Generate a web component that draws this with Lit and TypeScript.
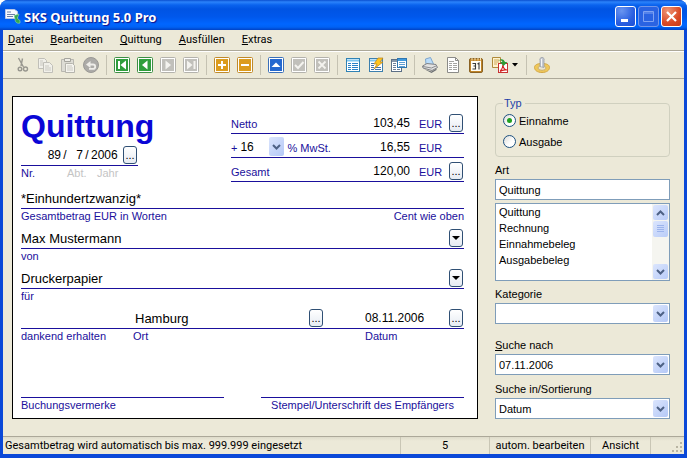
import { LitElement, html, css, svg, nothing, TemplateResult, SVGTemplateResult } from "lit";
import { customElement, property } from "lit/decorators.js";

const tile = (fill: string, edge: string, glyph: SVGTemplateResult) => svg`
  <rect x="0.5" y="0.5" width="15" height="15" rx="1" fill="#fff" stroke="${edge}"/>
  <rect x="2" y="2" width="12" height="12" fill="${fill}"/>${glyph}`;

const GREEN = "#2f9e3c";
const GREEN_EDGE = "#3d8f45";
const GREY = "#c1c0bb";
const GREY_EDGE = "#b3b2ac";
const GOLD = "#dc9c1e";
const GOLD_EDGE = "#c08a2a";

const icons: Record<string, SVGTemplateResult> = {
  cut: svg`<g fill="none" stroke="#98978f" stroke-width="1.4"><path d="M4.500 1 9.500 10M8.500 1.500 7 9" /><circle cx="6" cy="12" r="1.800"/><circle cx="11.500" cy="12" r="2"/></g>`,
  copy: svg`<g fill="#f1f0ea" stroke="#c0bfb8"><path d="M1.5 1.500h6l2 2v8h-8z"/><path d="M6.500 5.500h6l3 3v7h-9z"/></g><path d="M3 4h3M3 6h3M3 8h3M8 9h4M8 11h6M8 13h6" stroke="#c9c8c1"/>`,
  paste: svg`<path d="M1.500 2.500h12v12h-12z" fill="#dddcd5" stroke="#b8b7b0"/><path d="M4.500 1.500h6v3h-6z" fill="#efeee8" stroke="#a5a49e"/><path d="M5.500 6.500h7l2 2v7h-9z" fill="#f5f4ef" stroke="#b5b4ad"/><path d="M7 9h5M7 11h6M7 13h6" stroke="#c9c8c1"/>`,
  undo: svg`<circle cx="8" cy="8" r="7.500" fill="#acaba8" stroke="#9a9995"/><path d="M5 7.500h5a2.200 2.200 0 0 1 0 4.400H6" fill="none" stroke="#eeede9" stroke-width="1.800"/><path d="M3 7.500 7.500 4v7z" fill="#eeede9"/>`,
  first: tile(GREEN, GREEN_EDGE, svg`<path d="M4 4h2v8H4zM12 3.500v9L6.500 8z" fill="#fff"/>`),
  prev: tile(GREEN, GREEN_EDGE, svg`<path d="M10.500 3.500v9L5 8z" fill="#fff"/>`),
  next: tile(GREY, GREY_EDGE, svg`<path d="M5.500 3.500v9L11 8z" fill="#f4f3ef"/>`),
  last: tile(GREY, GREY_EDGE, svg`<path d="M10.500 4h2v8h-2zM4 3.500v9L9.500 8z" fill="#f4f3ef"/>`),
  plus: tile(GOLD, GOLD_EDGE, svg`<path d="M7 4h2v3h3v2H9v3H7V9H4V7h3z" fill="#fff"/>`),
  minus: tile(GOLD, GOLD_EDGE, svg`<path d="M4 7h8v2H4z" fill="#fff"/>`),
  up: tile("#2468cf", "#3a6fb8", svg`<path d="M3.500 10 8 5.500l4.500 4.500z" fill="#fff"/>`),
  check: tile(GREY, GREY_EDGE, svg`<path d="M4 8l3 3 5.500-6" fill="none" stroke="#f4f3ef" stroke-width="2"/>`),
  cross: tile(GREY, GREY_EDGE, svg`<path d="M4.500 4.500l7 7M11.500 4.500l-7 7" stroke="#f4f3ef" stroke-width="1.800"/>`),
  list: svg`<rect x="1.500" y="1.500" width="13" height="13" fill="#fff" stroke="#2f82b5"/><path d="M2 3.500h12" stroke="#7cc4ee" stroke-width="2"/><path d="M3 6.500h3M3 8.500h3M3 10.500h3M3 12.500h3M7 6.500h6M7 8.500h6M7 10.500h6M7 12.500h6" stroke="#2a82c8"/>`,
  flash: svg`<rect x="1.500" y="1.500" width="13" height="13" fill="#fff" stroke="#3c7fae"/><path d="M2 3.500h12" stroke="#7cc4ee" stroke-width="2"/><path d="M3 6.500h3M3 8.500h3M3 10.500h3M3 12.500h3M7 10.500h6M7 12.500h6" stroke="#4272ac"/><path d="M10 1h5l-3 4h3L6 12l3-5H6z" fill="#ffc41e" stroke="#b8821b" stroke-width=".7"/>`,
  windows: svg`<rect x=".5" y="2.500" width="10" height="12" fill="#fff" stroke="#5c6f86"/><path d="M2 6.500h3M2 8.500h3M2 10.500h3M2 12.500h3M6 12.500h3" stroke="#70829a"/><path d="M1 4h9" stroke="#8595a8" stroke-width="2"/><rect x="6.500" y="1.500" width="9" height="9" fill="#fff" stroke="#2f76b0"/><path d="M7 3h8" stroke="#3f9ade" stroke-width="2"/><path d="M8 5.500h6M8 7.500h6M8 9.500h6" stroke="#5f9fd2"/>`,
  print: svg`<path d="M4 7.500 3.500 2l5-1.500 3 6.500" fill="#b9dcfa" stroke="#7fa6cc"/><path d="M.5 9 5 6.500l9 1 1.500 3-5.500 3L1 11z" fill="#e2e2e2" stroke="#808286"/><path d="M1 9.500l8.500 1.500L15 8.500" fill="none" stroke="#8b8d90"/><path d="M2 12l7.500 2.500 5-3v1.500L9.500 16z" fill="#6d7074"/>`,
  page: svg`<path d="M2.500.5h8l3 3v12h-11z" fill="#fff" stroke="#8b8b88"/><path d="M10.500.5v3h3" fill="none" stroke="#8b8b88"/><path d="M4 4.500h5M4 6.500h3M8 6.500h4M4 8.500h3M8 8.500h4M4 10.500h3M8 10.500h4M4 12.500h3M8 12.500h4" stroke="#a5a5a2"/>`,
  calendar: svg`<rect x="1.500" y="1.500" width="13" height="14" rx="1.500" fill="#c08428" stroke="#8a6224"/><rect x="3" y="4" width="10" height="10" fill="#fffdf5"/><path d="M4 .5v3M7 .5v3M10 .5v3M12.500.5v3" stroke="#f4e4b8"/><path d="M4.500 6.500h3v2.500h-2M7.500 9v3h-3M9.500 7l1.500-1v6.500" fill="none" stroke="#3a3a3a" stroke-width="1.100"/>`,
  pdf: svg`<path d="M.5.500h8v10h-8z" fill="#fdf3cf" stroke="#b08a3c"/><path d="M2 3h5M2 5h5M2 7h3" stroke="#cfa85a"/><rect x="6.500" y="6.500" width="9" height="9" fill="#fff" stroke="#c83232"/><path d="M8 14.500c2-2 3-4 3-7 0 3 1 5 4 5.500-3-.5-5 0-7 1.500z" fill="none" stroke="#d22020" stroke-width="1.100"/><path d="M6 4c3-3 6-2 7 1h2.500l-4 4-3.500-4h2.500C9.500 3 8 3 6 4z" fill="#2f9a36"/>`,
  stamp: svg`<path d="M.5 10.500C.5 8 3 6.500 8 6.500s7.500 1.500 7.500 4-2.500 5-7.500 5-7.500-2.500-7.500-5z" fill="#efc85a" stroke="#d2a646"/><ellipse cx="8" cy="11" rx="4" ry="2.300" fill="#e8e4d3" stroke="#c4a55a" stroke-width=".8"/><path d="M6 9.500V3.500a2.200 2.200 0 1 1 4 0v7z" fill="#c3c8d0" stroke="#9ba0a8" stroke-width=".8"/><path d="M7.500 2v7.500" stroke="#f3f5f8"/>`,
};

const glyph = (name: string) => html`<svg viewBox="0 0 16 16" width="16" height="16" aria-hidden="true">${icons[name]}</svg>`;

const chevron = (flip = false) => html`<svg viewBox="0 0 9 6" width="9" height="6" aria-hidden="true">
  <path d="${flip ? "M1 5l3.500-3.500L8 5" : "M1 1l3.500 3.500L8 1"}" fill="none" stroke="#4d6185" stroke-width="2"/></svg>`;

const shared = css`
  * { box-sizing: border-box; }
  button, input, select { font: inherit; color: inherit; margin: 0; padding: 0; border: 0; border-radius: 0; background: none; min-width: 0; }
  svg { display: block; flex: none; }
`;

@customElement("xp-combo")
export class XpCombo extends LitElement {
  @property() value = "";
  @property() label = "";
  @property({ type: Boolean, reflect: true }) flat = false;

  static styles = [shared, css`
    :host { display: block; }
    .combo { display: grid; grid-template-columns: 1fr 17px; height: 21px; border: 1px solid #7f9db9; background: #fff; }
    .field { appearance: none; grid-area: 1 / 1 / 2 / 3; width: 100%; height: 100%; padding-left: 3px; }
    .arrow { grid-area: 1 / 2; margin: 1px; border-radius: 2px; background: linear-gradient(135deg, #dbe5fd, #b4c8f6); display: flex; align-items: center; justify-content: center; pointer-events: none; }
    :host([flat]) .combo { border: 0; }
    :host([flat]) .field { padding-left: 0; }
  `];

  render() {
    return html`<div class="combo">
      <select class="field" aria-label=${this.label}><option>${this.value}</option></select>
      <span class="arrow">${chevron()}</span>
    </div>`;
  }
}

@customElement("app-titlebar")
export class AppTitlebar extends LitElement {
  static styles = [shared, css`
    .bar { display: flex; align-items: center; gap: 2px; height: 30px; padding: 3px 5px 0 5px; color: #fff;
      background: linear-gradient(#0a4fd0 0, #2b83fb 2px, #0a63ee 5px, #0054e3 9px, #0058ec 17px, #0066ff 24px, #0062f5 27px, #0042c4 30px); }
    .title { flex: 1; margin: 0; font: bold 13px/18px "Noto Sans", "Open Sans", sans-serif; text-shadow: 1px 1px 1px #0f1089; white-space: nowrap; }
    .btn { width: 21px; height: 21px; border: 1px solid #fff; border-radius: 3px; display: grid; place-items: center; background: radial-gradient(circle at 30% 20%, #6a95f0, #2a5fe0 60%, #1c4fd6); }
    .btn:disabled { border-color: #7096ea; background: #2a63e2; }
    .close { background: radial-gradient(circle at 30% 20%, #ee9576, #da4a26 60%, #c53a18); }
  `];

  render() {
    return html`<header class="bar">
      <svg viewBox="0 0 17 17" width="17" height="17" aria-hidden="true">
        <path d="M.5 1.500h9l3 2v7h-12z" fill="#f7f9ff" stroke="#b9c6e6"/>
        <path d="M2 4h4M2 6.500h8M2 8.500h6" stroke="#6d7ea8"/>
        <path d="M9 7.500l5-1.500-1 2.500c-1 2 0 3 2 4v2.500c-3 1-5-1-5-4z" fill="#34a853" stroke="#9adba8" stroke-width=".6"/>
      </svg>
      <h1 class="title">SKS Quittung 5.0 Pro</h1>
      <button class="btn" aria-label="Minimieren"><svg width="13" height="13"><path d="M2 9h7v3H2z" fill="#fff"/></svg></button>
      <button class="btn" disabled aria-label="Maximieren"><svg width="13" height="13"><path d="M1.500 1.500h10v10h-10zM1 3h11" fill="none" stroke="#7ea2f2"/></svg></button>
      <button class="btn close" aria-label="Schließen"><svg width="13" height="13"><path d="M2 2l9 9M11 2l-9 9" stroke="#fff" stroke-width="2.200"/></svg></button>
    </header>`;
  }
}

@customElement("app-toolbar")
export class AppToolbar extends LitElement {
  static styles = [shared, css`
    .menu { display: flex; gap: 17px; height: 21px; padding-left: 5px; border-bottom: 1px solid #aca899; line-height: 20px; }
    .tools { display: flex; align-items: center; height: 28px; padding-left: 7px; border-top: 1px solid #fff; border-bottom: 1px solid #aca899; }
    .tool { display: flex; align-items: center; justify-content: center; width: 23px; height: 22px; }
    .split { width: 35px; gap: 4px; }
    .sep { width: 8px; height: 20px; display: flex; justify-content: center; }
    .sep::before { content: ""; width: 1px; background: #c5c2b2; }
  `];

  private menu = ["Datei", "Bearbeiten", "Quittung", "Ausfüllen", "Extras"];
  private groups: [string, string][][] = [
    [["cut", "Ausschneiden"], ["copy", "Kopieren"], ["paste", "Einfügen"], ["undo", "Rückgängig"]],
    [["first", "Erste"], ["prev", "Vorige"], ["next", "Nächste"], ["last", "Letzte"]],
    [["plus", "Neu"], ["minus", "Löschen"]],
    [["up", "Bearbeiten"], ["check", "Speichern"], ["cross", "Verwerfen"]],
    [["list", "Liste"], ["flash", "Schnellliste"], ["windows", "Fenster"]],
    [["print", "Drucken"], ["page", "Vorschau"], ["calendar", "Kalender"], ["pdf", "PDF"]],
    [["stamp", "Stempel"]],
  ];

  render() {
    return html`
      <nav class="menu">${this.menu.map((m) => html`<button><u>${m[0]}</u>${m.slice(1)}</button>`)}</nav>
      <div class="tools" role="toolbar">
        ${this.groups.map((g, i) => html`
          ${i ? html`<span class="sep"></span>` : nothing}
          ${g.map(([id, label]) => html`<button class="tool ${id === "pdf" ? "split" : ""}" aria-label=${label}>
            ${glyph(id)}${id === "pdf" ? html`<svg width="6" height="4"><path d="M0 0h6L3 3.500z" fill="#000"/></svg>` : nothing}
          </button>`)}`)}
      </div>`;
  }
}

@customElement("receipt-form")
export class ReceiptForm extends LitElement {
  static styles = [shared, css`
    :host { display: block; min-width: 0; }
    .paper { height: 100%; display: flex; flex-direction: column; padding: 13px 13px 6px 8px; border: 1px solid #000; background: #fff; color: #1a0f9c; font: 11px/14px "Liberation Sans", Arial, sans-serif; }
    .head { display: grid; grid-template-columns: 117px 233px; justify-content: space-between; height: 73px; }
    .title { margin: 0; font-size: 32px; line-height: 32px; font-weight: bold; color: #0a06d6; white-space: nowrap; }
    .line { display: flex; align-items: flex-end; height: 26px; border-bottom: 1px solid #1a0f9c; }
    .short { height: 24px; }
    .val { height: 20px; color: #000; font-size: 13px; }
    .num { font-size: 12px; }
    .right { text-align: right; }
    .grow { flex: 1; width: 0; }
    .amount { width: 60px; margin: 0 9px 0 auto; }
    .tag { line-height: 18px; white-space: nowrap; }
    .unit { width: 30px; line-height: 18px; }
    .end { width: 15px; }
    .btn { width: 14px; height: 18px; margin: 0 1px 1px 0; flex: none; display: flex; align-items: center; justify-content: center; border: 1px solid #2f4f74; border-radius: 3px; background: linear-gradient(#fff, #e6ebf2); color: #000; line-height: 16px; }
    .caption { display: flex; justify-content: space-between; height: 14px; }
    .ids { display: grid; grid-template-columns: 46px 30px 1fr; }
    .faint { color: #c4c4c4; }
    .place { display: grid; grid-template-columns: 112px 1fr 99px; }
    .no { width: 18px; } .dept { width: 14px; } .year { width: 32px; }
    .slash { flex: none; line-height: 20px; color: #000; width: 8px; font-size: 12px; text-align: center; }
    .rate { width: 45px; font-size: 12px; color: #000; margin: 0 2px 0 3px; }
    .town { flex: 1; width: 0; margin-left: 114px; }
    .day { width: 84px; margin-left: 41px; font-size: 12px; }
    .foot { display: grid; grid-template-columns: 1fr 1fr; gap: 37px; margin-top: auto; }
    .sign { border-top: 1px solid #1a0f9c; }
    .center { text-align: center; }
  `];

  private more(label: string) {
    return html`<button class="btn" aria-label=${label}>...</button>`;
  }

  private drop(label: string) {
    return html`<button class="btn" aria-label=${label}><svg width="8" height="4"><path d="M0 0h8L4 4z" fill="#000"/></svg></button>`;
  }

  private wide(id: string, label: string, value: string, button: TemplateResult | typeof nothing, extra = "") {
    return html`<div>
      <div class="line"><input id=${id} class="val grow" .value=${value}>${button}</div>
      <div class="caption"><label for=${id}>${label}</label><span>${extra}</span></div>
    </div>`;
  }

  render() {
    return html`<form class="paper">
      <div class="head">
        <div>
          <h2 class="title">Quittung</h2>
          <div class="line short">
            <span class="grow"></span>
            <input id="no" class="val num right no" value="89"><span class="slash">/</span>
            <input id="dept" class="val num right dept" value="7"><span class="slash">/</span>
            <input id="year" class="val num year" value="2006">
            ${this.more("Nummer wählen")}
          </div>
          <div class="ids"><label for="no">Nr.</label><label class="faint" for="dept">Abt.</label><label class="faint" for="year">Jahr</label></div>
        </div>
        <div>
          <div class="line short"><label class="tag" for="net">Netto</label><input id="net" class="val num right amount" value="103,45"><span class="unit">EUR</span>${this.more("Netto berechnen")}</div>
          <div class="line short"><span class="tag">+</span><xp-combo class="rate" flat value="16" label="MwSt."></xp-combo><span class="tag">% MwSt.</span><input aria-label="MwSt. Betrag" class="val num right amount" value="16,55"><span class="unit">EUR</span><span class="end"></span></div>
          <div class="line short"><label class="tag" for="sum">Gesamt</label><input id="sum" class="val num right amount" value="120,00"><span class="unit">EUR</span>${this.more("Gesamt berechnen")}</div>
        </div>
      </div>
      ${this.wide("words", "Gesamtbetrag EUR in Worten", "*Einhundertzwanzig*", nothing, "Cent wie oben")}
      ${this.wide("from", "von", "Max Mustermann", this.drop("Zahler wählen"))}
      ${this.wide("for", "für", "Druckerpapier", this.drop("Zweck wählen"))}
      <div>
        <div class="line"><input id="town" class="val town" value="Hamburg">${this.more("Ort wählen")}<input id="day" class="val day" value="08.11.2006">${this.more("Datum wählen")}</div>
        <div class="place"><span>dankend erhalten</span><label for="town">Ort</label><label for="day">Datum</label></div>
      </div>
      <div class="foot">
        <div class="sign">Buchungsvermerke</div>
        <div class="sign center">Stempel/Unterschrift des Empfängers</div>
      </div>
    </form>`;
  }
}

@customElement("filter-panel")
export class FilterPanel extends LitElement {
  static styles = [shared, css`
    .side { display: flex; flex-direction: column; gap: 2px; font: 11px/14px "Liberation Sans", Arial, sans-serif; }
    .group { margin: 0 0 4px; padding: 0 7px 4px; border: 1px solid #d0d0bf; border-radius: 4px; min-width: 0; }
    .legend { padding: 0 3px 0 1px; color: #1c3fa8; }
    .choice { display: flex; align-items: center; gap: 3px; height: 21px; }
    .radio { appearance: none; width: 13px; height: 13px; border: 1px solid #1c5180; border-radius: 50%; background: linear-gradient(135deg, #dcdcd7, #fff 60%); display: grid; place-items: center; }
    .radio:checked::before { content: ""; width: 5px; height: 5px; border-radius: 50%; background: #21a121; }
    .text { height: 21px; padding: 0 3px; border: 1px solid #7f9db9; background: #fff; }
    .listbox { display: flex; height: 78px; margin: 1px 0 4px; border: 1px solid #7f9db9; background: #fff; }
    .list { flex: 1; height: 100%; padding: 2px 0; overflow: hidden; outline: 0; scrollbar-width: none; }
    .item { height: 16px; min-height: 16px; padding: 0 3px; line-height: 16px; }
    .scroll { width: 17px; padding: 1px; display: flex; flex-direction: column; gap: 1px; background: #f5f5f0; }
    .knob { height: 15px; display: flex; align-items: center; justify-content: center; border-radius: 2px; background: linear-gradient(135deg, #dbe5fd, #b9ccf8); }
    .thumb { height: 16px; }
    .down { margin-top: auto; }
    .later { margin-top: 12px; }
    .near { margin-top: 5px; }
  `];

  render() {
    return html`<aside class="side">
      <fieldset class="group">
        <legend class="legend">Typ</legend>
        <label class="choice"><input class="radio" type="radio" name="typ" checked>Einnahme</label>
        <label class="choice"><input class="radio" type="radio" name="typ">Ausgabe</label>
      </fieldset>
      <label for="art">Art</label>
      <input id="art" class="text" value="Quittung">
      <div class="listbox">
        <select class="list" size="4" aria-label="Art auswählen">
          ${["Quittung", "Rechnung", "Einnahmebeleg", "Ausgabebeleg"].map((t) => html`<option class="item">${t}</option>`)}
        </select>
        <div class="scroll">
          <button class="knob" aria-label="Nach oben">${chevron(true)}</button>
          <div class="knob thumb"><svg width="7" height="8"><path d="M0 .5h7M0 2.500h7M0 4.500h7M0 6.500h7" stroke="#9cb4ec"/></svg></div>
          <button class="knob down" aria-label="Nach unten">${chevron()}</button>
        </div>
      </div>
      <span>Kategorie</span>
      <xp-combo label="Kategorie"></xp-combo>
      <span class="later"><u>S</u>uche nach</span>
      <xp-combo label="Suche nach" value="07.11.2006"></xp-combo>
      <span class="near">Suche in/Sortierung</span>
      <xp-combo label="Suche in/Sortierung" value="Datum"></xp-combo>
    </aside>`;
  }
}

@customElement("app-root")
export class AppRoot extends LitElement {
  static styles = [shared, css`
    :host { display: block; background: #fff; font: 11px/14px Roboto, "Liberation Sans", sans-serif; color: #000; }
    .window { display: flex; flex-direction: column; min-height: 100vh; border-radius: 8px 8px 0 0; overflow: hidden; background: #0a48d8; }
    .client { flex: 1; display: flex; flex-direction: column; margin: 0 3px 4px; background: #ece9d8; }
    .main { flex: 1; display: grid; grid-template-columns: minmax(0, 1fr) 175px; gap: 17px; padding: 17px 14px 17px 9px; }
    .status { display: flex; height: 18px; border-top: 1px solid #aca899; line-height: 18px; white-space: nowrap; background: linear-gradient(#dedbca, #ece9d8 4px); }
    .cell { border-right: 1px solid #c9c6b5; text-align: center; }
    .note { flex: 1; padding-left: 2px; text-align: left; }
    .count { width: 89px; } .mode { width: 101px; } .view { width: 60px; }
    .grip { width: 33px; display: flex; align-items: flex-end; justify-content: flex-end; padding: 1px; }
  `];

  render() {
    return html`<div class="window">
      <app-titlebar></app-titlebar>
      <div class="client">
        <app-toolbar></app-toolbar>
        <main class="main"><receipt-form></receipt-form><filter-panel></filter-panel></main>
        <footer class="status">
          <div class="cell note">Gesamtbetrag wird automatisch bis max. 999.999 eingesetzt</div>
          <div class="cell count">5</div>
          <div class="cell mode">autom. bearbeiten</div>
          <div class="cell view">Ansicht</div>
          <div class="grip"><svg width="12" height="12"><path d="M9 1h2v2H9zM5 5h2v2H5zM9 5h2v2H9zM1 9h2v2H1zM5 9h2v2H5zM9 9h2v2H9z" fill="#b8b4a2"/></svg></div>
        </footer>
      </div>
    </div>`;
  }
}
